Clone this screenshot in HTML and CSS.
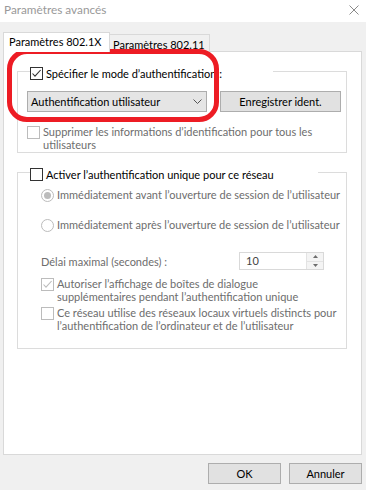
FILE: index.html
```html
<!DOCTYPE html>
<html lang="fr">
<head>
<meta charset="utf-8">
<title>Paramètres avancés</title>
<link rel="stylesheet" href="styles.css">
</head>
<body>
<div class="titlebar">
  <span class="title">Paramètres avancés</span>
  <svg class="close" width="10" height="10" viewBox="0 0 10 10"><path d="M0.5 0.5L9.5 9.5M9.5 0.5L0.5 9.5" stroke="#8a8a8a" stroke-width="1" fill="none"/></svg>
</div>
<div class="tabs">
  <div class="tab active">Paramètres 802.1X</div>
  <div class="tab">Paramètres 802.11</div>
</div>
<div class="panel">
  <fieldset class="group g1">
    <legend class="legend l1">
      <span class="cb"><svg width="11" height="11" viewBox="0 0 11 11"><path d="M1.5 5.5L4 8.2L9.6 2" stroke="#333" stroke-width="1.1" fill="none"/></svg></span>
      <span class="txt">Spécifier le mode d’authentification :</span>
    </legend>
    <div class="row">
      <div class="combo">
        <span>Authentification utilisateur</span>
        <svg width="9" height="5" viewBox="0 0 9 5"><path d="M0.5 0.5L4.5 4.5L8.5 0.5" stroke="#555" stroke-width="1" fill="none"/></svg>
      </div>
      <button class="btn">Enregistrer ident.</button>
    </div>
    <div class="check disabled c-supp">
      <span class="cb"></span>
      <span class="txt">Supprimer les informations d’identification pour tous les<br>utilisateurs</span>
    </div>
  </fieldset>

  <fieldset class="group g2">
    <legend class="legend l2">
      <span class="cb"></span>
      <span class="txt">Activer l’authentification unique pour ce réseau</span>
    </legend>
    <div class="check disabled r1">
      <span class="radio on"></span>
      <span class="txt">Immédiatement avant l’ouverture de session de l’utilisateur</span>
    </div>
    <div class="check disabled r2">
      <span class="radio"></span>
      <span class="txt">Immédiatement après l’ouverture de session de l’utilisateur</span>
    </div>
    <div class="delay disabled">
      <span class="txt">Délai maximal (secondes) :</span>
      <div class="spin">
        <span class="val">10</span>
        <span class="arrows">
          <span class="arr"><svg width="5" height="3" viewBox="0 0 5 3"><path d="M2.5 0L5 3H0Z" fill="#6d6d6d"/></svg></span>
          <span class="arr"><svg width="5" height="3" viewBox="0 0 5 3"><path d="M0 0H5L2.5 3Z" fill="#6d6d6d"/></svg></span>
        </span>
      </div>
    </div>
    <div class="check disabled c-auth">
      <span class="cb"><svg width="11" height="11" viewBox="0 0 11 11"><path d="M1.5 5.5L4 8.2L9.6 2" stroke="#bcbcbc" stroke-width="1.1" fill="none"/></svg></span>
      <span class="txt">Autoriser l’affichage de boîtes de dialogue<br>supplémentaires pendant l’authentification unique</span>
    </div>
    <div class="check disabled c-vlan">
      <span class="cb"></span>
      <span class="txt">Ce réseau utilise des réseaux locaux virtuels distincts pour<br>l’authentification de l’ordinateur et de l’utilisateur</span>
    </div>
  </fieldset>
</div>
<div class="footer">
  <button class="btn small">OK</button>
  <button class="btn small">Annuler</button>
</div>
<div class="annot"></div>
</body>
</html>
```
FILE: styles.css
```css
* { box-sizing: border-box; }
html, body { margin: 0; padding: 0; }
body {
  width: 366px;
  height: 490px;
  overflow: hidden;
  position: relative;
  background: #f0f0f0;
  font-family: Lato, "Noto Sans", sans-serif;
  font-size: 11px;
  line-height: 13px;
  color: #000;
}
.titlebar {
  height: 22px;
  background: #fff;
  display: flex;
  align-items: flex-start;
  justify-content: space-between;
  padding: 3px 7px 0 4px;
}
.title { color: #999; font-size: 11.8px; }
.close { display: block; margin-top: 2px; }

.tabs {
  height: 29px;
  display: flex;
  align-items: flex-end;
  padding-left: 3px;
}
.tab {
  height: 17px;
  width: 100px;
  padding: 3px 0 0 3px;
  border: 1px solid #d9d9d9;
  border-left: none;
  border-bottom: none;
  background: #f0f0f0;
  white-space: nowrap;
}
.tab.active {
  height: 20px;
  width: 107px;
  padding: 2px 0 0 5px;
  border-left: 1px solid #d9d9d9;
  background: #fff;
  margin-bottom: -1px;
  position: relative;
  z-index: 1;
}

.panel {
  height: 404px;
  margin: 0 4px 0 3px;
  background: #fff;
  border: 1px solid #d9d9d9;
}

.group {
  margin: 11px 14px 0 13px;
  padding: 0 0 1px 0;
  border: 1px solid #dcdcdc;
  min-width: 0;
}
.legend {
  padding: 4px 0 0 0;
  margin-left: 12px;
  display: flex;
  align-items: flex-start;
  white-space: nowrap;
}
.l1 { width: 243px; }
.l2 { width: 288px; }
.legend .txt { margin-left: 3px; }

.cb {
  flex: none;
  width: 13px;
  height: 13px;
  border: 1px solid #333;
  background: #fff;
  display: flex;
  align-items: center;
  justify-content: center;
}
.cb svg { display: block; }
.disabled .cb { border-color: #bcbcbc; }
.disabled { color: #6d6d6d; }

.radio {
  flex: none;
  width: 13px;
  height: 13px;
  border: 1px solid #bcbcbc;
  border-radius: 50%;
  background: #fff;
  display: flex;
  align-items: center;
  justify-content: center;
}
.radio.on::after {
  content: "";
  width: 7px;
  height: 7px;
  border-radius: 50%;
  background: #bcbcbc;
}

.row {
  display: flex;
  gap: 13px;
  margin: 11px 0 0 9px;
}
.combo {
  width: 180px;
  height: 21px;
  border: 1px solid #adadad;
  background: #e5e5e5;
  display: flex;
  align-items: center;
  justify-content: space-between;
  padding: 0 4px 0 3px;
}
.combo svg { display: block; }
.btn {
  width: 121px;
  height: 21px;
  border: 1px solid #adadad;
  background: #e1e1e1;
  font: inherit;
  color: #000;
  padding: 0;
  margin: 0;
}
.btn.small { width: 73px; }

.check {
  display: flex;
  align-items: flex-start;
}
.check .txt { margin-left: 3px; white-space: nowrap; }
.c-supp { margin: 13px 0 0 9px; }
.r1 { margin: 7px 0 0 23px; }
.r2 { margin: 16px 0 0 23px; }
.c-auth { margin: 7px 0 0 23px; }
.c-vlan { margin: 3px 0 0 23px; }
.check .cb, .check .radio { margin-top: 1px; }

.g2 { padding-bottom: 16px; }

.delay {
  display: flex;
  align-items: center;
  justify-content: space-between;
  margin: 20px 22px 0 23px;
  height: 18px;
}
.spin {
  width: 85px;
  height: 18px;
  border: 1px solid #d9d9d9;
  display: flex;
  background: #fff;
}
.spin .val {
  flex: 1;
  padding-left: 6px;
  line-height: 16px;
  color: #444;
}
.arrows {
  width: 17px;
  display: flex;
  flex-direction: column;
  border-left: 1px solid #e3e3e3;
  background: #f4f4f4;
}
.arr {
  flex: 1;
  display: flex;
  align-items: center;
  justify-content: center;
}
.arr + .arr { border-top: 1px solid #e3e3e3; }
.arr svg { display: block; }

.footer {
  display: flex;
  justify-content: flex-end;
  gap: 8px;
  margin: 8px 4px 0 0;
}

.annot {
  position: absolute;
  left: 7px;
  top: 49px;
  width: 212px;
  height: 73px;
  border: 5px solid #ed1c24;
  border-radius: 20px;
  pointer-events: none;
}
```
